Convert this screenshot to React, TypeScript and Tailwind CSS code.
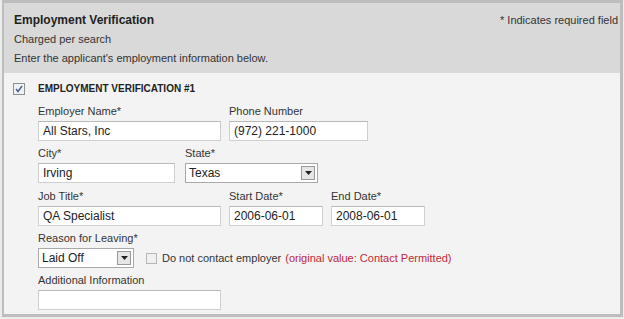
import React from "react";

const Input = ({ w, value }: { w: string; value?: string }) => (
  <div
    className={`${w} h-[20px] bg-white border border-[#cfcfcf] border-t-[#b9b9b9] flex items-center px-[4px] text-[12px] text-[#222] leading-none`}
  >
    {value}
  </div>
);

const Select = ({ w, value }: { w: string; value: string }) => (
  <div
    className={`${w} h-[20px] bg-white border border-[#a9a9a9] flex items-center pl-[3px] pr-[2px] text-[12px] text-[#222] leading-none`}
  >
    <span className="flex-1">{value}</span>
    <div className="w-[14px] h-[14px] bg-[#e6e6e6] border border-[#9a9a9a] flex items-center justify-center">
      <svg width="7" height="4" viewBox="0 0 7 4">
        <path d="M0 0h7L3.5 4z" fill="#222" />
      </svg>
    </div>
  </div>
);

const Field = ({
  label,
  children,
}: {
  label: string;
  children: React.ReactNode;
}) => (
  <div className="flex flex-col">
    <div className="text-[11px] leading-[13px] text-[#333] mb-[3px]">{label}</div>
    {children}
  </div>
);

export default function App() {
  return (
    <div
      className="w-[624px] h-[319px] bg-[#ececec] overflow-hidden"
      style={{ fontFamily: '"Liberation Sans", Arial, sans-serif' }}
    >
      <div className="w-[621px] h-[317px] ml-[2px] border-t-[3px] border-l-[2px] border-r-[3px] border-b-[3px] border-[#bdbdbd] flex flex-col bg-[#f3f3f3]">
        <div className="h-[70px] shrink-0 bg-[#d9d9d9] pl-[10px] pr-[2px] pt-[10px] flex justify-between">
          <div className="flex flex-col text-[#333]">
            <div className="text-[12px] font-bold leading-[14px] text-[#222]">
              Employment Verification
            </div>
            <div className="text-[11px] leading-[13px] mt-[6px]">Charged per search</div>
            <div className="text-[11px] leading-[13px] mt-[6px]">
              Enter the applicant's employment information below.
            </div>
          </div>
          <div className="text-[11px] leading-[13px] text-[#333] pt-[1px]">
            * Indicates required field
          </div>
        </div>
        <div className="flex flex-col pl-[9px] pt-[9px]">
          <div className="flex items-center">
            <div className="w-[12px] h-[12px] border border-[#8e8f8f] bg-[#eef2f7] flex items-center justify-center">
              <svg width="8" height="8" viewBox="0 0 8 8">
                <path d="M1 4l2 2.5L7 1" stroke="#4a5a8a" strokeWidth="1.4" fill="none" />
              </svg>
            </div>
            <div className="ml-[13px] text-[10px] font-bold text-[#222] leading-[14px]">
              EMPLOYMENT VERIFICATION #1
            </div>
          </div>
          <div className="pl-[25px] flex flex-col gap-[6px] mt-[9px]">
            <div className="flex gap-[8px]">
              <Field label="Employer Name*">
                <Input w="w-[183px]" value="All Stars, Inc" />
              </Field>
              <Field label="Phone Number">
                <Input w="w-[139px]" value="(972) 221-1000" />
              </Field>
            </div>
            <div className="flex gap-[10px]">
              <Field label="City*">
                <Input w="w-[137px]" value="Irving" />
              </Field>
              <Field label="State*">
                <Select w="w-[133px]" value="Texas" />
              </Field>
            </div>
            <div className="flex gap-[8px] mt-[1px]">
              <Field label="Job Title*">
                <Input w="w-[183px]" value="QA Specialist" />
              </Field>
              <Field label="Start Date*">
                <Input w="w-[94px]" value="2006-06-01" />
              </Field>
              <Field label="End Date*">
                <Input w="w-[94px]" value="2008-06-01" />
              </Field>
            </div>
            <Field label="Reason for Leaving*">
              <div className="flex items-center">
                <Select w="w-[96px]" value="Laid Off" />
                <div className="ml-[12px] w-[11px] h-[11px] border border-[#b5b5b5] bg-[#f0f0f0]" />
                <span className="ml-[5px] text-[11px] text-[#333]">Do not contact employer</span>
                <span className="ml-[4px] text-[11px] text-[#c2273a]">
                  (original value: Contact Permitted)
                </span>
              </div>
            </Field>
            <Field label="Additional Information">
              <Input w="w-[183px]" />
            </Field>
          </div>
        </div>
      </div>
    </div>
  );
}
